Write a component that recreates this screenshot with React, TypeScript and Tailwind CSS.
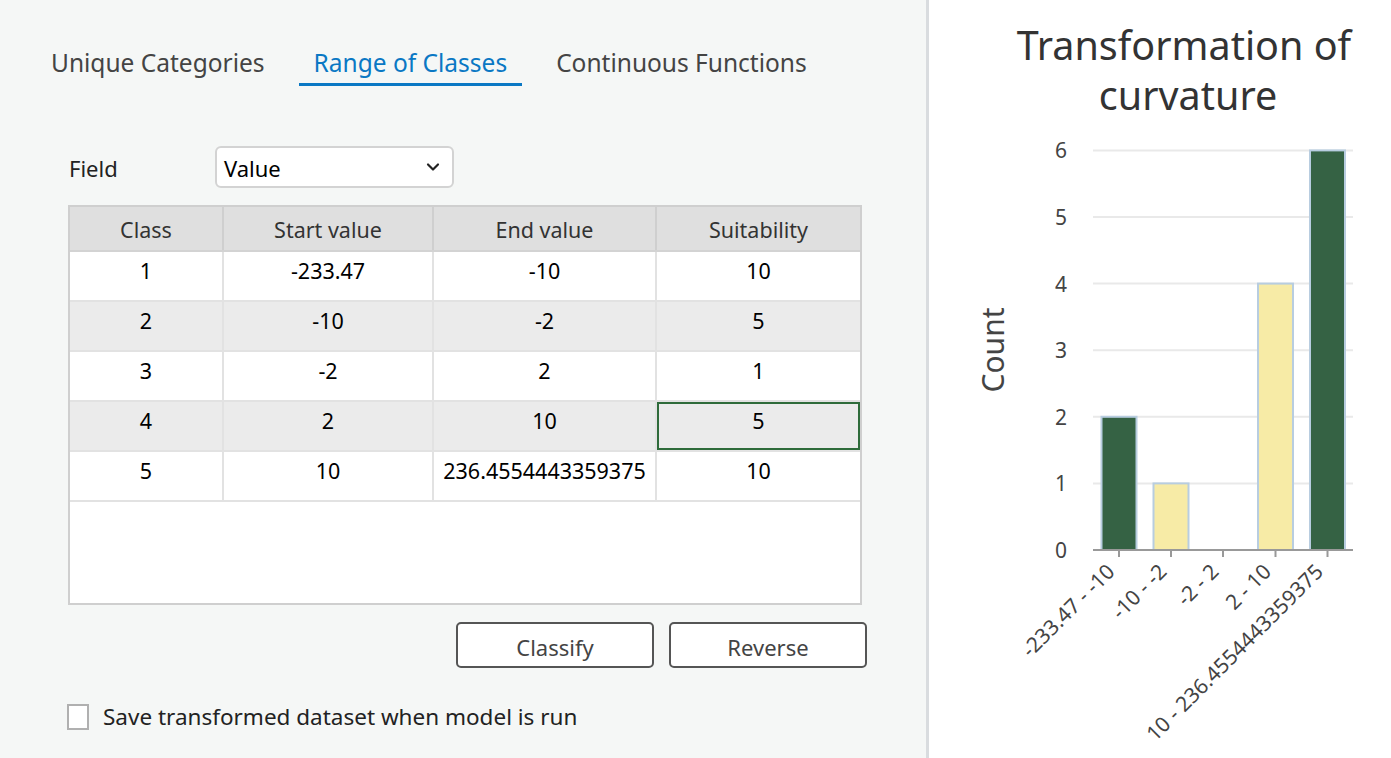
import React from "react";
import { ChevronDown } from "lucide-react";

const rows = [
  ["1", "-233.47", "-10", "10"],
  ["2", "-10", "-2", "5"],
  ["3", "-2", "2", "1"],
  ["4", "2", "10", "5"],
  ["5", "10", "236.4554443359375", "10"],
];

const colW = ["w-[154px] border-r-2", "w-[210px] border-r-2", "w-[223px] border-r-2", "flex-1"];

function Chart() {
  const yTicks = [0, 1, 2, 3, 4, 5, 6];
  const y = (v: number) => 550 - v * 66.6;
  const bars = [
    { c: 1119, v: 2, fill: "#356244" },
    { c: 1171, v: 1, fill: "#f7eba6" },
    { c: 1223, v: 0, fill: "#f7eba6" },
    { c: 1275.5, v: 4, fill: "#f7eba6" },
    { c: 1327.5, v: 6, fill: "#356244" },
  ];
  const labels = ["-233.47 - -10", "-10 - -2", "-2 - 2", "2 - 10", "10 - 236.4554443359375"];
  return (
    <svg width={462} height={758} viewBox="929 0 462 758" style={{ fontFamily: "'Noto Sans', sans-serif" }}>
      <text x={1184} y={60} textAnchor="middle" fontSize={39.5} fill="#333">
        Transformation of
      </text>
      <text x={1188} y={110} textAnchor="middle" fontSize={39.5} fill="#333">
        curvature
      </text>
      {yTicks.map((t) => (
        <g key={t}>
          {t > 0 && <line x1={1093} x2={1353} y1={y(t)} y2={y(t)} stroke="#e9e9e9" strokeWidth={2} />}
          <text x={1067} y={y(t) + 8} textAnchor="end" fontSize={21} fill="#444">
            {t}
          </text>
        </g>
      ))}
      <text
        x={0}
        y={0}
        transform="translate(1004 350) rotate(-90)"
        textAnchor="middle"
        fontSize={30}
        fill="#444"
      >
        Count
      </text>
      {bars.map((b, i) =>
        b.v > 0 ? (
          <rect
            key={i}
            x={b.c - 17.5}
            y={y(b.v)}
            width={35}
            height={550 - y(b.v)}
            fill={b.fill}
            stroke="#b8cde0"
            strokeWidth={2}
          />
        ) : null
      )}
      <line x1={1093} x2={1353} y1={550} y2={550} stroke="#999" strokeWidth={2} />
      {bars.map((b, i) => (
        <line key={i} x1={b.c} x2={b.c} y1={550} y2={557} stroke="#999" strokeWidth={2} />
      ))}
      {bars.map((b, i) => (
        <text
          key={i}
          x={0}
          y={0}
          transform={`translate(${b.c - 3} ${573}) rotate(-45)`}
          textAnchor="end"
          fontSize={21}
          fill="#444"
        >
          {labels[i]}
        </text>
      ))}
    </svg>
  );
}

export default function App() {
  return (
    <div className="flex w-[1391px] h-[758px] overflow-hidden font-['Noto_Sans',sans-serif]">
      <div className="w-[926px] h-full bg-[#f5f7f6] pt-[43px]">
        {/* tabs */}
        <div className="flex gap-[19px] pl-[36px]">
          <div className="h-[43px] px-[15px] border-b-[3px] border-transparent text-[24.5px] leading-[40px] text-[#444]">
            Unique Categories
          </div>
          <div className="h-[43px] px-[15px] border-b-[3px] border-[#0a78c4] text-[24.5px] leading-[40px] text-[#0a78c4]">
            Range of Classes
          </div>
          <div className="h-[43px] px-[15px] border-b-[3px] border-transparent text-[24.5px] leading-[40px] text-[#444]">
            Continuous Functions
          </div>
        </div>

        <div className="pl-[68px]">
          {/* field */}
          <div className="flex items-center mt-[60px] h-[42px]">
            <div className="w-[147px] pl-[1px] pt-[3px] text-[22px] text-[#222]">Field</div>
            <div className="flex items-center justify-between w-[239px] h-[42px] bg-white border-2 border-[#d3d3d3] rounded-[6px] pl-[7px] pr-[9px]">
              <span className="pt-[3px] text-[22px] text-black">Value</span>
              <ChevronDown size={20} strokeWidth={2.6} color="#222" />
            </div>
          </div>

          {/* table */}
          <div className="mt-[17px] w-[794px] h-[400px] border-2 border-[#cfcfcf] bg-white flex flex-col">
            <div className="flex h-[45px] bg-[#dfdfdf] border-b-2 border-[#d3d3d3]">
              {["Class", "Start value", "End value", "Suitability"].map((h, i) => (
                <div
                  key={h}
                  className={`${colW[i]} border-[#cfcfcf] flex items-center justify-center pt-[3px] text-[21.5px] text-[#333]`}
                >
                  {h}
                </div>
              ))}
            </div>
            {rows.map((r, ri) => (
              <div
                key={ri}
                className={`flex h-[50px] border-b-2 border-[#e2e2e2] ${ri % 2 === 1 ? "bg-[#ebebeb]" : "bg-white"}`}
              >
                {r.map((c, ci) => (
                  <div
                    key={ci}
                    className={`${colW[ci]} border-[#e2e2e2] flex justify-center pt-[4px] text-[21.5px] leading-[30px] text-black ${
                      ri === 3 && ci === 3 ? "shadow-[inset_0_0_0_2px_#2e6b3a]" : ""
                    }`}
                  >
                    {c}
                  </div>
                ))}
              </div>
            ))}
          </div>

          {/* buttons */}
          <div className="flex gap-[15px] mt-[17px] ml-[388px]">
            <button className="w-[198px] h-[46px] pt-[4px] bg-white border-2 border-[#555] rounded-[5px] text-[22px] text-[#444]">
              Classify
            </button>
            <button className="w-[198px] h-[46px] pt-[4px] bg-white border-2 border-[#555] rounded-[5px] text-[22px] text-[#444]">
              Reverse
            </button>
          </div>

          {/* checkbox */}
          <div className="flex items-center mt-[32px] -ml-[1px]">
            <div className="w-[22px] h-[26px] bg-white border-2 border-[#b0b0b0]" />
            <span className="ml-[14px] text-[22.5px] text-[#222]">Save transformed dataset when model is run</span>
          </div>
        </div>
      </div>
      <div className="w-[3px] h-full bg-[#d9dcdf]" />
      <div className="flex-1 h-full bg-white">
        <Chart />
      </div>
    </div>
  );
}
